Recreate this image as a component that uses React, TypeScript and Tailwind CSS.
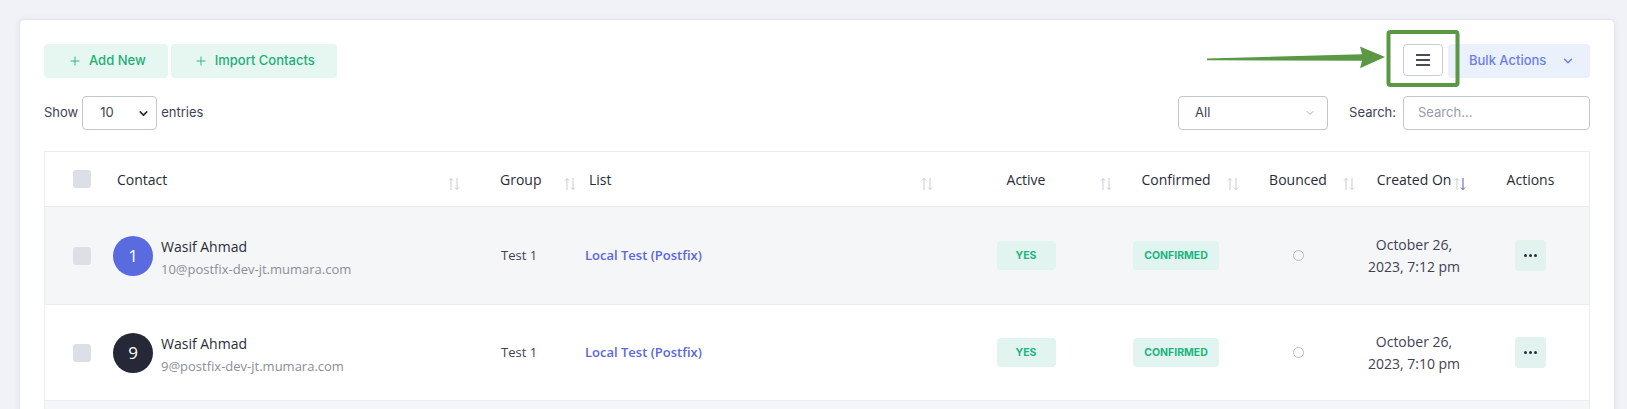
import { ChevronDown, Plus } from "lucide-react";

type Row = {
  n: string;
  avatar: string;
  name: string;
  email: string;
  group: string;
  list: string;
  date: [string, string];
};

const rows: Row[] = [
  {
    n: "1",
    avatar: "bg-[#5a6be0]",
    name: "Wasif Ahmad",
    email: "10@postfix-dev-jt.mumara.com",
    group: "Test 1",
    list: "Local Test (Postfix)",
    date: ["October 26,", "2023, 7:12 pm"],
  },
  {
    n: "9",
    avatar: "bg-[#262838]",
    name: "Wasif Ahmad",
    email: "9@postfix-dev-jt.mumara.com",
    group: "Test 1",
    list: "Local Test (Postfix)",
    date: ["October 26,", "2023, 7:10 pm"],
  },
];

const cols =
  "grid grid-cols-[58px_367px_110px_360px_172px_128px_116px_116px_117px]";

function SortIcon({ active }: { active?: boolean }) {
  return (
    <svg width="12" height="14" viewBox="0 0 12 14" fill="none" strokeWidth="1">
      <path d="M3 13V1.5M1 3.5l2-2 2 2" stroke="#c9cbd1" />
      <path
        d="M9 1v11.5M7 10.5l2 2 2-2"
        stroke={active ? "#5457c9" : "#c9cbd1"}
      />
    </svg>
  );
}

function Checkbox() {
  return <span className="block h-[18px] w-[18px] rounded-[3px] bg-[#dcdfe6]" />;
}

function Th({
  label,
  className,
  icon,
  active,
}: {
  label: string;
  className: string;
  icon?: number;
  active?: boolean;
}) {
  return (
    <div className={`relative flex items-center ${className}`}>
      <span>{label}</span>
      {icon !== undefined && (
        <span className="absolute top-[25px]" style={{ left: icon }}>
          <SortIcon active={active} />
        </span>
      )}
    </div>
  );
}

export default function App() {
  return (
    <div className="relative h-[409px] overflow-hidden bg-[#f1f2f7] pl-[19px] pr-[12px] pt-[19px] font-['Inter',sans-serif]">
      <div className="rounded-[5px] border border-[#e3e5ec] bg-white px-[24px] pt-[24px] shadow-[0_0_6px_rgba(40,45,80,0.06)]">
        {/* toolbar */}
        <div className="flex items-start justify-between">
          <div className="flex gap-[3px]">
            <button className="flex h-[34px] items-center gap-[7px] rounded-[4px] bg-[#e6f6f0] pl-[24px] pr-[22px] text-[13px] font-medium text-[#1fae79]">
              <Plus size={14} strokeWidth={1.5} />
              Add New
            </button>
            <button className="flex h-[34px] items-center gap-[7px] rounded-[4px] bg-[#e6f6f0] pl-[23px] pr-[22px] text-[13px] font-medium text-[#1fae79]">
              <Plus size={14} strokeWidth={1.5} />
              Import Contacts
            </button>
          </div>
          <div className="flex items-start gap-[5px]">
            <button className="flex h-[32px] w-[40px] flex-col items-center justify-center gap-[3px] rounded-[4px] border border-[#c9ccd3] bg-white">
              <span className="block h-[2px] w-[14px] bg-[#4b4d55]" />
              <span className="block h-[2px] w-[14px] bg-[#4b4d55]" />
              <span className="block h-[2px] w-[14px] bg-[#4b4d55]" />
            </button>
            <button className="flex h-[34px] w-[142px] items-center gap-[15px] rounded-[4px] bg-[#ebf0fd] pl-[21px] text-[13px] font-medium text-[#6b7fe6]">
              Bulk Actions
              <ChevronDown size={14} strokeWidth={2.5} />
            </button>
          </div>
        </div>

        {/* filters */}
        <div className="mt-[18px] flex items-center justify-between text-[13px] text-[#3f4254]">
          <div className="flex items-center gap-[4px]">
            <span>Show</span>
            <div className="flex h-[34px] w-[75px] items-center justify-between rounded-[4px] border border-[#c3c6d0] pl-[17px] pr-[6px]">
              <span>10</span>
              <ChevronDown size={13} strokeWidth={3} className="text-[#2b2b2b]" />
            </div>
            <span>entries</span>
          </div>
          <div className="flex items-center">
            <div className="flex h-[34px] w-[150px] items-center justify-between rounded-[4px] border border-[#c3c6d0] pl-[16px] pr-[11px]">
              <span>All</span>
              <ChevronDown size={12} strokeWidth={1.5} className="text-[#8a8d99]" />
            </div>
            <span className="ml-[21px]">Search:</span>
            <div className="ml-[7px] flex h-[34px] w-[187px] items-center rounded-[4px] border border-[#c3c6d0] pl-[14px] text-[#9a9cab]">
              Search...
            </div>
          </div>
        </div>

        {/* table */}
        <div className="mt-[21px] border border-b-0 border-[#ebedf3] font-['Open_Sans',sans-serif]">
          <div className={`${cols} h-[55px] border-b border-[#ebedf3] text-[14px] font-medium text-[#2a2c36]`}>
            <div className="flex items-center pl-[28px]">
              <Checkbox />
            </div>
            <Th label="Contact" className="pl-[14px]" icon={345} />
            <Th label="Group" className="pl-[30px]" icon={94} />
            <Th label="List" className="pl-[9px]" icon={341} />
            <Th label="Active" className="justify-center" icon={160} />
            <Th label="Confirmed" className="justify-center" icon={115} />
            <Th label="Bounced" className="justify-center" icon={103} />
            <Th label="Created On" className="justify-center" icon={98} active />
            <Th label="Actions" className="justify-center" />
          </div>

          {rows.map((r, i) => (
            <div
              key={r.n}
              className={`${cols} border-b border-[#ebedf3] ${
                i % 2 === 0 ? "bg-[#f5f6f8]" : "bg-white"
              } ${i === 0 ? "h-[98px]" : "h-[96px]"}`}
            >
              <div className="flex items-center pl-[28px]">
                <Checkbox />
              </div>
              <div className="flex items-center gap-[8px] pl-[10px]">
                <span
                  className={`flex h-[40px] w-[40px] items-center justify-center rounded-full text-[17px] text-white ${r.avatar}`}
                >
                  {r.n}
                </span>
                <div className="pt-[4px]">
                  <div className="text-[14px] font-medium leading-[20px] text-[#2a2c36]">
                    {r.name}
                  </div>
                  <div className="mt-[2px] text-[13px] leading-[20px] text-[#8b8e98]">
                    {r.email}
                  </div>
                </div>
              </div>
              <div className="flex items-center pl-[31px] text-[13px] text-[#3f4254]">
                {r.group}
              </div>
              <div className="flex items-center pl-[5px] text-[13px] font-semibold text-[#5a67de]">
                {r.list}
              </div>
              <div className="flex items-center justify-center">
                <span className="flex h-[29px] w-[59px] items-center justify-center rounded-[4px] bg-[#e2f4ef] font-['Inter',sans-serif] text-[10.5px] font-bold text-[#21b47e]">
                  YES
                </span>
              </div>
              <div className="flex items-center justify-center">
                <span className="flex h-[29px] w-[86px] items-center justify-center rounded-[4px] bg-[#e2f4ef] font-['Inter',sans-serif] text-[10.5px] font-bold text-[#21b47e]">
                  CONFIRMED
                </span>
              </div>
              <div className="flex items-center justify-center">
                <span className="block h-[11px] w-[11px] rounded-full border-[1.5px] border-[#b9bcc4]" />
              </div>
              <div className="flex flex-col items-center justify-center text-[14px] leading-[22px] text-[#3f4254]">
                <span>{r.date[0]}</span>
                <span>{r.date[1]}</span>
              </div>
              <div className="flex items-center justify-center">
                <button className="flex h-[31px] w-[31px] items-center justify-center gap-[2px] rounded-[4px] bg-[#e2f3ef]">
                  <span className="block h-[3px] w-[3px] rounded-full bg-[#2a2c36]" />
                  <span className="block h-[3px] w-[3px] rounded-full bg-[#2a2c36]" />
                  <span className="block h-[3px] w-[3px] rounded-full bg-[#2a2c36]" />
                </button>
              </div>
            </div>
          ))}
          {/* next row, cut off by the window */}
          <div className="h-[96px] bg-[#f5f6f8]" />
        </div>
      </div>

      {/* annotation */}
      <svg
        className="pointer-events-none absolute left-0 top-0"
        width="1627"
        height="409"
        viewBox="0 0 1627 409"
      >
        <rect
          x="1388.5"
          y="32"
          width="69"
          height="53"
          rx="2"
          fill="none"
          stroke="#5b9846"
          strokeWidth="4"
        />
        <path
          d="M1207 58.6 L1362 54.2 L1360 46.5 L1385 57 L1360 68.3 L1362 60.8 L1207 60.2 Z"
          fill="#5b9846"
        />
      </svg>
    </div>
  );
}
